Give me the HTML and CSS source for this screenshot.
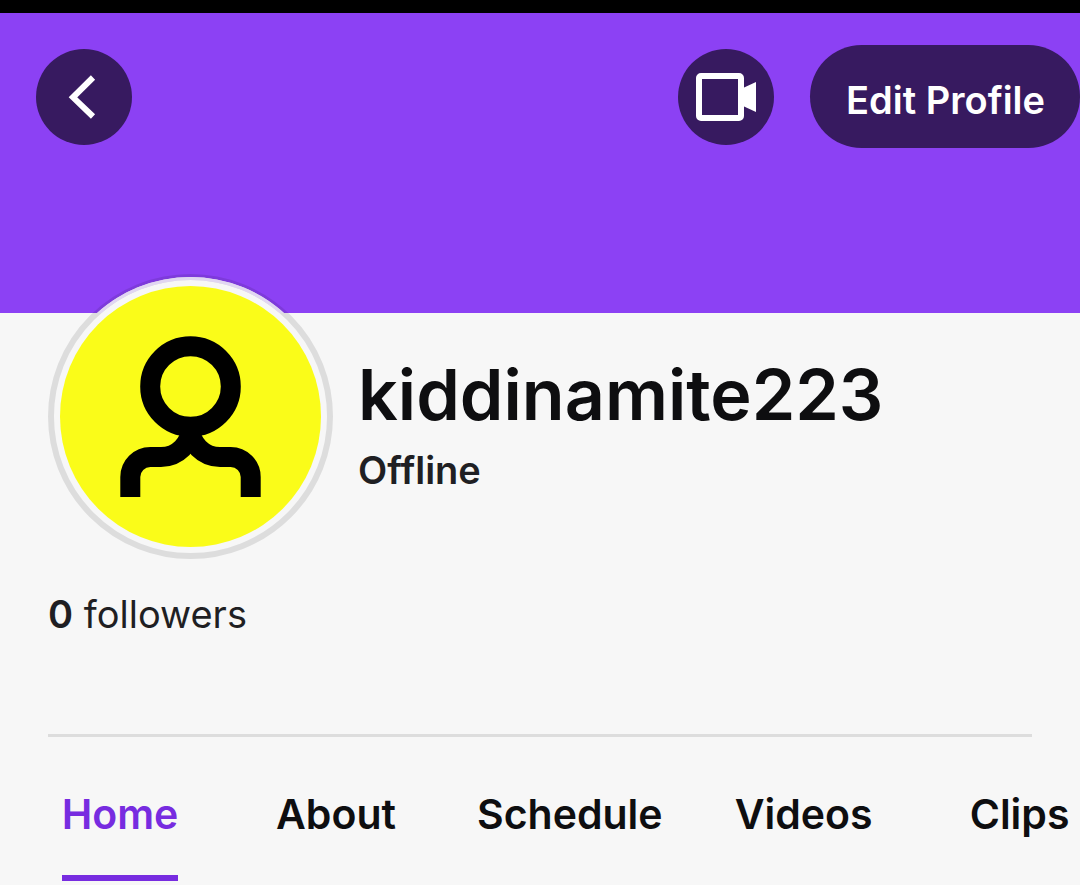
FILE: index.html
```html
<!DOCTYPE html>
<html lang="en">
<head>
<meta charset="utf-8">
<meta name="viewport" content="width=device-width, initial-scale=1">
<title>kiddinamite223</title>
<link rel="stylesheet" href="styles.css">
</head>
<body>
<div class="status-bar"></div>
<header class="banner">
  <button class="round-button" type="button" aria-label="Back">
    <svg width="96" height="96" viewBox="0 0 96 96" fill="none" stroke="#fff" stroke-width="6"><path d="M57 28.500 37 48.300 57 67.500"/></svg>
  </button>
  <div class="banner-actions">
    <button class="round-button" type="button" aria-label="Go live">
      <svg width="96" height="96" viewBox="0 0 96 96"><rect x="21" y="27" width="42" height="42" rx="2" fill="none" stroke="#fff" stroke-width="6"/><path d="M65 39 78 33V63L65 57Z" fill="#fff"/></svg>
    </button>
    <button class="edit-button" type="button">Edit Profile</button>
  </div>
</header>
<main>
  <section class="profile">
    <svg class="avatar" width="285" height="285" viewBox="0 0 285 285" role="img" aria-label="Profile picture">
      <clipPath id="over-banner"><rect width="285" height="39"/></clipPath>
      <circle cx="142.500" cy="142.500" r="139.500" fill="#f7f7f7"/>
      <circle cx="142.500" cy="142.500" r="139.500" fill="none" stroke="#000" stroke-opacity=".1" stroke-width="6"/>
      <circle cx="142.500" cy="142.500" r="138" fill="none" stroke="#e1d6f2" stroke-width="3" clip-path="url(#over-banner)"/>
      <circle cx="142.500" cy="142.500" r="130.500" fill="#fafc19"/>
      <g fill="none" stroke="#000" stroke-width="20">
        <circle cx="142.500" cy="112.500" r="40.300"/>
        <path d="M82.300 223V203a20 20 0 0 1 20-20H113a30 30 0 0 0 30-30"/>
        <path d="M202.700 223V203a20 20 0 0 0-20-20H172a30 30 0 0 1-30-30"/>
      </g>
    </svg>
    <div class="identity">
      <h1 class="name">kiddinamite223</h1>
      <p class="status">Offline</p>
    </div>
  </section>
  <p class="followers"><strong>0</strong> followers</p>
  <hr class="divider">
  <nav class="tabs">
    <a class="tab" href="#home" aria-current="page"><span class="tab-label">Home</span></a>
    <a class="tab" href="#about"><span class="tab-label">About</span></a>
    <a class="tab" href="#schedule"><span class="tab-label">Schedule</span></a>
    <a class="tab" href="#videos"><span class="tab-label">Videos</span></a>
    <a class="tab" href="#clips"><span class="tab-label">Clips</span></a>
  </nav>
</main>
</body>
</html>
```
FILE: styles.css
```css
* { box-sizing: border-box; }
body {
  margin: 0;
  background: #f7f7f7;
  color: #0e0e10;
  font-family: Inter, "Liberation Sans", sans-serif;
  overflow-x: hidden;
}
button { border: 0; padding: 0; color: #fff; background: #371a60; font-family: inherit; }
.status-bar { height: 13px; background: #000; }
.banner {
  display: flex;
  justify-content: space-between;
  align-items: flex-start;
  height: 300px;
  padding: 32px 0 0 36px;
  background: #8c41f4;
}
.round-button { width: 96px; height: 96px; border-radius: 50%; }
.round-button svg { display: block; }
.banner > .round-button { margin-top: 4px; }
.banner-actions { display: flex; align-items: center; gap: 36px; }
.edit-button {
  padding: 30px 35px 22px 36px;
  border-radius: 52px;
  font-size: 38px;
  line-height: 51px;
  font-weight: 600;
  white-space: nowrap;
}
.profile { display: flex; gap: 25px; padding: 0 48px; margin-top: -39px; }
.avatar { display: block; flex: none; }
.identity { padding-top: 77px; }
.name { margin: 0; font-size: 70px; line-height: 88px; font-weight: 600; }
.status { margin: 6px 0 0; color: #1f1f23; font-size: 38px; line-height: 50px; font-weight: 600; }
.followers { margin: 30px 48px 0; color: #1f1f23; font-size: 38px; line-height: 50px; }
.followers strong { font-weight: 600; }
.divider { height: 3px; margin: 95px 48px 0; border: 0; background: #ddd; }
.tabs { display: flex; padding-left: 12px; overflow: hidden; }
.tab {
  display: flex;
  flex: none;
  justify-content: center;
  min-width: 216px;
  padding: 0 33px;
  color: inherit;
  text-decoration: none;
  font-size: 41px;
  line-height: 50px;
  font-weight: 600;
}
.tab-label { padding: 52px 0 36px; border-bottom: 6px solid transparent; }
.tab[aria-current] { color: #772ce0; }
.tab[aria-current] .tab-label { border-color: currentColor; }
```
